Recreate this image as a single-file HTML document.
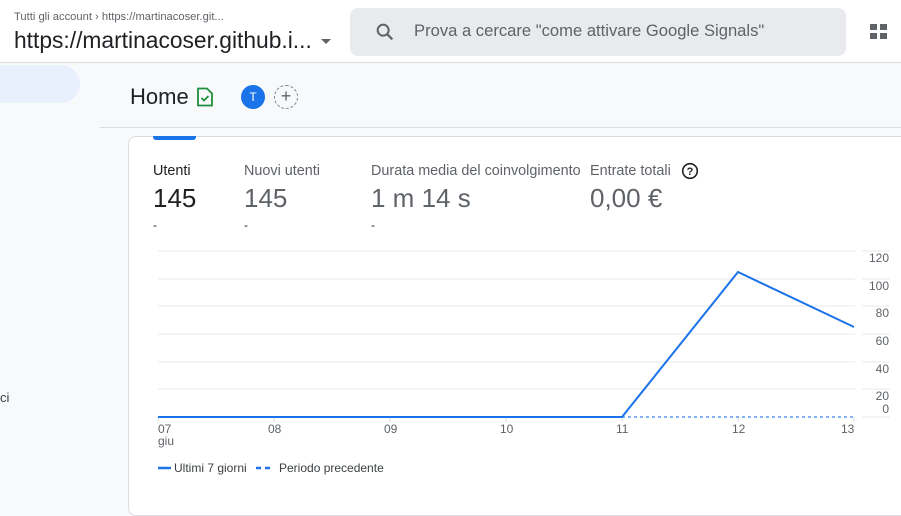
<!DOCTYPE html>
<html><head><meta charset="utf-8"><style>
*{margin:0;padding:0;box-sizing:border-box}
body{width:901px;height:499px;overflow:hidden;background:#f8f9fa;font-family:"Liberation Sans",sans-serif;position:relative;color:#202124}
.a{position:absolute;white-space:nowrap}
</style></head><body>
<div class="a" style="left:0;top:0;width:901px;height:63px;background:#fff;border-bottom:1px solid #dadce0"></div>
<div class="a" style="left:14px;top:11px;font-size:11.2px;color:#5f6368">Tutti gli account › https://martinacoser.git...</div>
<div class="a" style="left:14px;top:27px;font-size:22.8px;color:#202124">https://martinacoser.github.i...</div>
<div class="a" style="left:321px;top:39px;width:0;height:0;border-left:5px solid transparent;border-right:5px solid transparent;border-top:5px solid #5f6368"></div>
<div class="a" style="left:350px;top:8px;width:496px;height:48px;background:#e8eaed;border-radius:8px"></div>
<svg class="a" style="left:374px;top:21px" width="22" height="22" viewBox="0 0 24 24"><circle cx="10" cy="10" r="6" fill="none" stroke="#5f6368" stroke-width="2.2"/><path d="M14.5 14.5L20 20" stroke="#5f6368" stroke-width="2.4"/></svg>
<div class="a" style="left:414px;top:21px;font-size:16.6px;color:#5f6368">Prova a cercare "come attivare Google Signals"</div>
<div class="a" style="left:870px;top:24px;width:7px;height:6px;background:#5f6368"></div>
<div class="a" style="left:880px;top:24px;width:7px;height:6px;background:#5f6368"></div>
<div class="a" style="left:870px;top:33px;width:7px;height:6px;background:#5f6368"></div>
<div class="a" style="left:880px;top:33px;width:7px;height:6px;background:#5f6368"></div>
<div class="a" style="left:-20px;top:65px;width:100px;height:38px;background:#e8f0fe;border-radius:19px"></div>
<div class="a" style="left:0;top:390px;font-size:13px;color:#3c4043">ci</div>
<div class="a" style="left:130px;top:84px;font-size:22px;color:#202124">Home</div>
<svg class="a" style="left:196px;top:87px" width="18" height="20" viewBox="0 0 18 20"><path d="M2 1.5h9l5 5V18.5H2z" fill="none" stroke="#1e8e3e" stroke-width="1.8"/><path d="M5.5 11l2.5 2.5 4.5-4.5" fill="none" stroke="#1e8e3e" stroke-width="1.8"/></svg>
<div class="a" style="left:241px;top:85px;width:24px;height:24px;border-radius:50%;background:#1a73e8;color:#fff;font-size:12px;text-align:center;line-height:24px">T</div>
<div class="a" style="left:274px;top:85px;width:24px;height:24px;border-radius:50%;border:1px dashed #80868b;color:#5f6368;font-size:18px;text-align:center;line-height:21px">+</div>
<div class="a" style="left:100px;top:127px;width:801px;height:1px;background:#dadce0"></div>
<div class="a" style="left:128px;top:136px;width:790px;height:380px;background:#fff;border:1px solid #dadce0;border-radius:8px"></div>
<div class="a" style="left:153px;top:136px;width:43px;height:4px;background:#1a73e8;border-radius:0 0 3px 3px"></div>
<div class="a" style="left:153px;top:163px;font-size:14.4px;color:#202124">Utenti</div>
<div class="a" style="left:153px;top:183px;font-size:26px;color:#202124">145</div>
<div class="a" style="left:244px;top:163px;font-size:14.4px;color:#5f6368">Nuovi utenti</div>
<div class="a" style="left:244px;top:183px;font-size:26px;color:#5f6368">145</div>
<div class="a" style="left:371px;top:163px;font-size:14.4px;color:#5f6368">Durata media del coinvolgimento</div>
<div class="a" style="left:371px;top:183px;font-size:26px;color:#5f6368">1 m 14 s</div>
<div class="a" style="left:590px;top:163px;font-size:14.4px;color:#5f6368">Entrate totali</div>
<svg class="a" style="left:681px;top:162px" width="18" height="18" viewBox="0 0 18 18"><circle cx="9" cy="9" r="7.3" fill="none" stroke="#202124" stroke-width="1.6"/><text x="9" y="13" font-size="11" text-anchor="middle" font-family="Liberation Sans" font-weight="bold" fill="#202124">?</text></svg>
<div class="a" style="left:590px;top:183px;font-size:26px;color:#5f6368">0,00 €</div>
<div class="a" style="left:153px;top:218px;font-size:12px">-</div>
<div class="a" style="left:244px;top:218px;font-size:12px">-</div>
<div class="a" style="left:371px;top:218px;font-size:12px">-</div>
<svg class="a" style="left:0;top:0" width="901" height="499">
<g stroke="#e8eaed" stroke-width="1">
<line x1="158" y1="251" x2="855" y2="251"/><line x1="158" y1="279" x2="855" y2="279"/><line x1="158" y1="306" x2="855" y2="306"/><line x1="158" y1="334" x2="855" y2="334"/><line x1="158" y1="362" x2="855" y2="362"/><line x1="158" y1="389" x2="855" y2="389"/>
<line x1="862" y1="251" x2="890" y2="251"/><line x1="862" y1="279" x2="890" y2="279"/><line x1="862" y1="306" x2="890" y2="306"/><line x1="862" y1="334" x2="890" y2="334"/><line x1="862" y1="362" x2="890" y2="362"/><line x1="862" y1="389" x2="890" y2="389"/><line x1="862" y1="417" x2="890" y2="417"/>
</g>
<g stroke="#dadce0"><line x1="158" y1="417" x2="158" y2="422"/><line x1="274" y1="417" x2="274" y2="422"/><line x1="390" y1="417" x2="390" y2="422"/><line x1="506" y1="417" x2="506" y2="422"/><line x1="622" y1="417" x2="622" y2="422"/><line x1="738" y1="417" x2="738" y2="422"/><line x1="854" y1="417" x2="854" y2="422"/></g>
<line x1="622" y1="417" x2="854" y2="417" stroke="#1a73e8" stroke-width="1.5" stroke-dasharray="3,3" opacity=".7"/>
<polyline points="158,417 622,417 738,272 854,327" fill="none" stroke="#1a73e8" stroke-width="2"/>
<g font-family="Liberation Sans" font-size="12" fill="#5f6368" text-anchor="end">
<text x="889" y="262">120</text><text x="889" y="290">100</text><text x="889" y="317">80</text><text x="889" y="345">60</text><text x="889" y="373">40</text><text x="889" y="400">20</text><text x="889" y="413">0</text>
</g>
<g font-family="Liberation Sans" font-size="12" fill="#5f6368">
<text x="158" y="433">07</text><text x="158" y="445">giu</text><text x="268" y="433">08</text><text x="384" y="433">09</text><text x="500" y="433">10</text><text x="616" y="433">11</text><text x="732" y="433">12</text><text x="841" y="433">13</text>
</g>
<line x1="158" y1="468" x2="171" y2="468" stroke="#1a73e8" stroke-width="2.5"/>
<line x1="256" y1="468" x2="272" y2="468" stroke="#1a73e8" stroke-width="2.5" stroke-dasharray="5,4"/>
<g font-family="Liberation Sans" font-size="12" fill="#3c4043"><text x="174" y="472">Ultimi 7 giorni</text><text x="279" y="472">Periodo precedente</text></g>
</svg>
</body></html>
